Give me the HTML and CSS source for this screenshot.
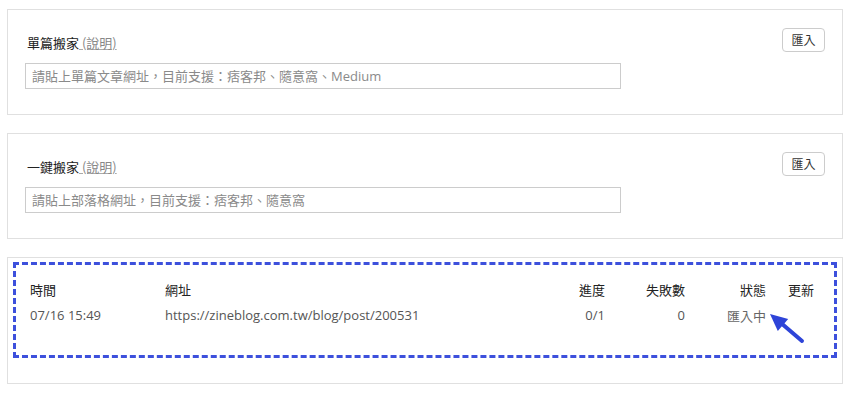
FILE: index.html
```html
<!DOCTYPE html>
<html lang="zh-Hant">
<head>
<meta charset="utf-8">
<link rel="stylesheet" href="styles.css">
</head>
<body>
<div class="page">
  <section class="card">
    <div class="card-head">
      <div class="title">單篇搬家<a class="help" href="#"> (說明)</a></div>
      <button class="btn">匯入</button>
    </div>
    <input class="url-input" type="text" placeholder="請貼上單篇文章網址，目前支援：痞客邦、隨意窩、Medium">
  </section>
  <section class="card">
    <div class="card-head">
      <div class="title">一鍵搬家<a class="help" href="#"> (說明)</a></div>
      <button class="btn">匯入</button>
    </div>
    <input class="url-input" type="text" placeholder="請貼上部落格網址，目前支援：痞客邦、隨意窩">
  </section>
  <section class="card card-log">
    <div class="highlight">
      <div class="log-table">
        <div class="th">時間</div>
        <div class="th">網址</div>
        <div class="th num">進度</div>
        <div class="th num">失敗數</div>
        <div class="th num">狀態</div>
        <div class="th num">更新</div>
        <div class="td">07/16 15:49</div>
        <div class="td">https://zineblog.com.tw/blog/post/200531</div>
        <div class="td num">0/1</div>
        <div class="td num">0</div>
        <div class="td num status">匯入中</div>
        <div class="td num"></div>
      </div>
    </div>
    <svg class="arrow" width="42" height="37" viewBox="0 0 42 37">
      <line x1="16" y1="14" x2="37" y2="32" stroke="#2e44d8" stroke-width="4" stroke-linecap="round"/>
      <polygon points="5,5 23.2,9.9 12.8,22.1" fill="#2e44d8"/>
    </svg>
  </section>
</div>
</body>
</html>
```

FILE: styles.css
```css
* { box-sizing: border-box; }
html, body { margin: 0; padding: 0; background: #fff; }
body {
  font-family: "Open Sans", "Noto Sans CJK TC", sans-serif;
  font-size: 13px;
  color: #333;
}
.page {
  padding: 9px 7px 0 7px;
  display: flex;
  flex-direction: column;
  gap: 18px;
}
.card {
  border: 1px solid #e0e0e0;
  padding: 18px 17px 25px 17px;
  background: #fff;
}
.card-head {
  display: flex;
  justify-content: space-between;
  align-items: flex-end;
}
.title {
  font-family: "Noto Sans CJK TC", sans-serif;
  font-size: 13px;
  line-height: 20px;
  color: #222;
  padding-left: 2px;
  margin-bottom: -1px;
}
.help {
  color: #888;
  text-decoration: underline;
  text-decoration-color: #aaa;
}
.btn {
  font-family: "Noto Sans CJK TC", sans-serif;
  font-size: 12px;
  color: #333;
  background: #fff;
  border: 1px solid #ccc;
  border-radius: 4px;
  width: 43px;
  height: 24px;
  padding: 0;
  line-height: 22px;
}
.url-input {
  display: block;
  margin-top: 11px;
  width: 596px;
  height: 26px;
  border: 1px solid #ccc;
  padding: 0 6px;
  font-family: "Open Sans", "Noto Sans CJK TC", sans-serif;
  font-size: 13px;
  color: #333;
  outline: none;
}
.url-input::placeholder { color: #8a8a8a; }
.card-log {
  position: relative;
  padding: 4px 5px 25px 5px;
}
.highlight {
  border: 3px dashed #3d50dc;
  padding: 11px 20px 27px 14px;
}
.log-table {
  display: grid;
  grid-template-columns: 135px 1fr 80px 80px 81px 48px;
  grid-auto-rows: 26px;
  align-items: center;
}
.th {
  font-family: "Noto Sans CJK TC", sans-serif;
  font-size: 13px;
  color: #222;
}
.td {
  font-size: 13px;
  color: #555;
}
.status { color: #666; }
.num { text-align: right; }
.arrow {
  position: absolute;
  left: 757px;
  top: 51px;
}
```
